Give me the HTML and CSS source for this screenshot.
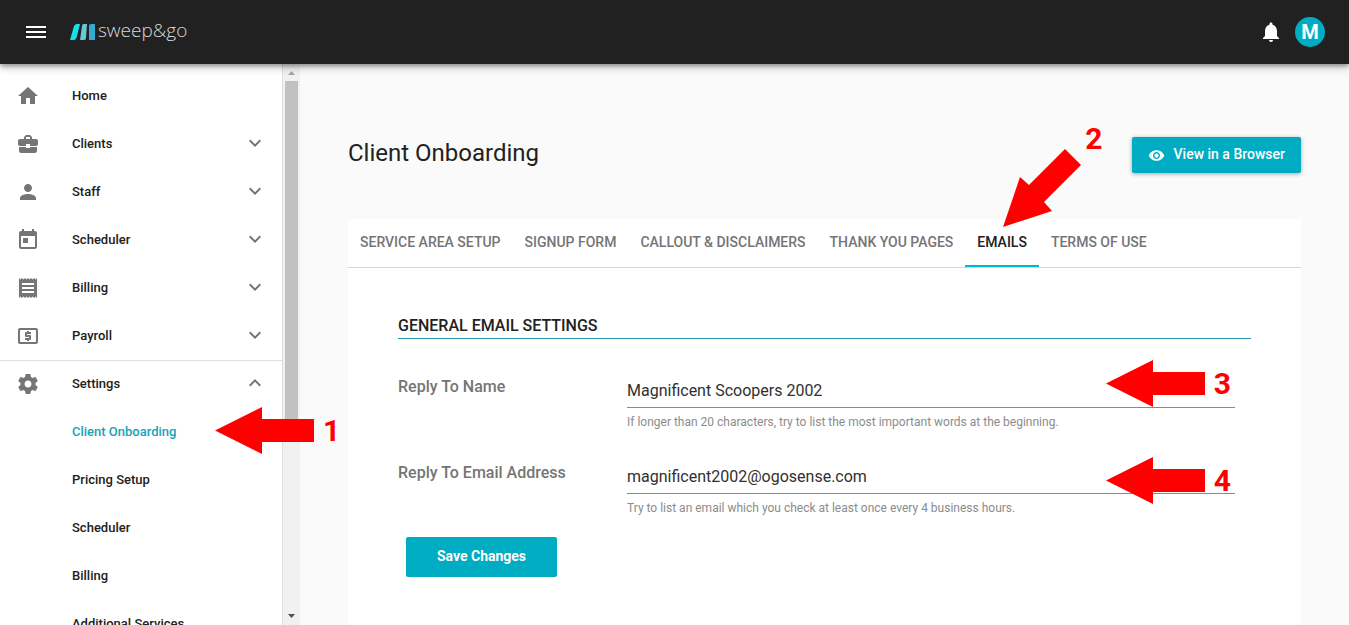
FILE: index.html
```html
<!DOCTYPE html>
<html lang="en">
<head>
  <meta charset="UTF-8">
  <meta name="viewport" content="width=device-width, initial-scale=1.0">
  <title>Client Onboarding</title>
  <link rel="stylesheet" href="styles.css">
</head>
<body>
  <!-- shared shapes -->
  <svg class="sprite" aria-hidden="true">
    <symbol id="chevron-down" viewBox="0 0 24 24"><path d="M7.41 8.59 12 13.17l4.59-4.58L18 10l-6 6-6-6z"/></symbol>
    <symbol id="chevron-up" viewBox="0 0 24 24"><path d="M7.41 15.41 12 10.83l4.59 4.58L18 14l-6-6-6 6z"/></symbol>
    <symbol id="arrow-left" viewBox="0 0 99 47"><path d="M0 23.5 47 0v12h52v23H47v12z"/></symbol>
  </svg>

  <header class="topbar">
    <button class="menu-btn" type="button" aria-label="Menu">
      <svg width="24" height="24" viewBox="0 0 24 24"><path d="M2 6h20v2H2zm0 5h20v2H2zm0 5h20v2H2z"/></svg>
    </button>
    <a class="logo" href="#">
      <svg width="25" height="16" viewBox="0 0 25 16">
        <path fill="#16e0ea" d="M4 2Q5 0 7 0h3L7 12q-1 4-3 4H0z"/>
        <path fill="#62cbd5" d="M12 2q0-2 2-2h3l-1 14q0 2-2 2H10z"/>
        <path fill="#36a9cf" d="M19 2q0-2 2-2h4v16h-6z"/>
      </svg>
      <span>sweep&amp;go</span>
    </a>
    <button class="bell-btn" type="button" aria-label="Notifications">
      <svg width="24" height="24" viewBox="0 0 24 24"><path d="M12 22c1.1 0 2-.9 2-2h-4c0 1.1.9 2 2 2zm6-6v-5c0-3.07-1.63-5.64-4.5-6.32V4c0-.83-.67-1.5-1.5-1.5s-1.5.67-1.5 1.5v.68C7.64 5.36 6 7.92 6 11v5l-2 2v1h16v-1z"/></svg>
    </button>
    <button class="avatar" type="button">M</button>
  </header>

  <div class="layout">
    <aside class="sidebar">
      <nav class="nav">
        <a class="nav-item" href="#">
          <svg class="nav-icon" viewBox="0 0 24 24"><path d="M10 20v-6h4v6h5v-8h3L12 3 2 12h3v8z"/></svg>
          <span>Home</span>
        </a>
        <a class="nav-item" href="#">
          <svg class="nav-icon" viewBox="0 0 24 24"><path d="M10 16v-1H3.01L3 19c0 1.11.89 2 2 2h14c1.11 0 2-.89 2-2v-4h-7v1zm10-9h-4.01V5l-2-2h-4l-2 2v2H4c-1.1 0-2 .9-2 2v3c0 1.11.89 2 2 2h6v-2h4v2h6c1.1 0 2-.9 2-2V9c0-1.1-.9-2-2-2zm-6 0h-4V5h4z"/></svg>
          <span>Clients</span>
          <svg class="chevron"><use href="#chevron-down"/></svg>
        </a>
        <a class="nav-item" href="#">
          <svg class="nav-icon" viewBox="0 0 24 24"><path d="M12 12c2.21 0 4-1.79 4-4s-1.79-4-4-4-4 1.79-4 4 1.79 4 4 4zm0 2c-2.67 0-8 1.34-8 4v2h16v-2c0-2.66-5.33-4-8-4z"/></svg>
          <span>Staff</span>
          <svg class="chevron"><use href="#chevron-down"/></svg>
        </a>
        <a class="nav-item" href="#">
          <svg class="nav-icon" viewBox="0 0 24 24"><path d="M19 3h-1V1h-2v2H8V1H6v2H5c-1.11 0-1.99.9-1.99 2L3 19c0 1.1.89 2 2 2h14c1.1 0 2-.9 2-2V5c0-1.1-.9-2-2-2zm0 16H5V8h14zM7 10h5v5H7z"/></svg>
          <span>Scheduler</span>
          <svg class="chevron"><use href="#chevron-down"/></svg>
        </a>
        <a class="nav-item" href="#">
          <svg class="nav-icon" viewBox="0 0 24 24"><path d="M18 17H6v-2h12zm0-4H6v-2h12zm0-4H6V7h12zM3 22l1.5-1.5L6 22l1.5-1.5L9 22l1.5-1.5L12 22l1.5-1.5L15 22l1.5-1.5L18 22l1.5-1.5L21 22V2l-1.5 1.5L18 2l-1.5 1.5L15 2l-1.5 1.5L12 2l-1.5 1.5L9 2 7.5 3.5 6 2 4.5 3.5 3 2z"/></svg>
          <span>Billing</span>
          <svg class="chevron"><use href="#chevron-down"/></svg>
        </a>
        <a class="nav-item" href="#">
          <svg class="nav-icon" viewBox="0 0 24 24"><path d="M11 17h2v-1h1c.55 0 1-.45 1-1v-3c0-.55-.45-1-1-1h-3v-1h4V8h-2V7h-2v1h-1c-.55 0-1 .45-1 1v3c0 .55.45 1 1 1h3v1H9v2h2zm9-13H4c-1.11 0-1.99.89-1.99 2L2 18c0 1.11.89 2 2 2h16c1.11 0 2-.89 2-2V6c0-1.11-.89-2-2-2zm0 14H4V6h16z"/></svg>
          <span>Payroll</span>
          <svg class="chevron"><use href="#chevron-down"/></svg>
        </a>
        <div class="nav-group">
          <a class="nav-item" href="#">
            <svg class="nav-icon" viewBox="0 0 24 24"><path d="M19.43 12.98c.04-.32.07-.64.07-.98s-.03-.66-.07-.98l2.11-1.65c.19-.15.24-.42.12-.64l-2-3.46c-.12-.22-.39-.3-.61-.22l-2.49 1c-.52-.4-1.08-.73-1.69-.98l-.38-2.65C14.46 2.18 14.25 2 14 2h-4c-.25 0-.46.18-.49.42l-.38 2.65c-.61.25-1.17.59-1.69.98l-2.49-1c-.23-.09-.49 0-.61.22l-2 3.46c-.13.22-.07.49.12.64l2.11 1.65c-.04.32-.07.65-.07.98s.03.66.07.98l-2.11 1.65c-.19.15-.24.42-.12.64l2 3.46c.12.22.39.3.61.22l2.49-1c.52.4 1.08.73 1.69.98l.38 2.65c.03.24.24.42.49.42h4c.25 0 .46-.18.49-.42l.38-2.65c.61-.25 1.17-.59 1.69-.98l2.49 1c.23.09.49 0 .61-.22l2-3.46c.12-.22.07-.49-.12-.64zM12 15.5c-1.93 0-3.5-1.57-3.5-3.5s1.57-3.5 3.5-3.5 3.5 1.57 3.5 3.5-1.57 3.5-3.5 3.5z"/></svg>
            <span>Settings</span>
            <svg class="chevron"><use href="#chevron-up"/></svg>
          </a>
          <div class="nav-current">
            <a class="nav-item nav-sub active" href="#">Client Onboarding</a>
            <div class="callout callout-nav">
              <svg class="arrow"><use href="#arrow-left"/></svg>
              <span>1</span>
            </div>
          </div>
          <a class="nav-item nav-sub" href="#">Pricing Setup</a>
          <a class="nav-item nav-sub" href="#">Scheduler</a>
          <a class="nav-item nav-sub" href="#">Billing</a>
          <a class="nav-item nav-sub" href="#">Additional Services</a>
        </div>
      </nav>
      <div class="scrollbar">
        <svg class="scroll-up" width="7" height="4" viewBox="0 0 7 4"><path d="M0 4 3.5 0 7 4z"/></svg>
        <div class="scroll-thumb"></div>
        <svg class="scroll-down" width="7" height="4" viewBox="0 0 7 4"><path d="M0 0h7L3.5 4z"/></svg>
      </div>
    </aside>

    <main class="content">
      <div class="page-head">
        <h1>Client Onboarding</h1>
        <button class="btn view-btn" type="button">
          <svg width="17" height="17" viewBox="0 0 24 24"><path d="M12 4.5C7 4.5 2.73 7.61 1 12c1.73 4.39 6 7.5 11 7.5s9.27-3.11 11-7.5c-1.73-4.39-6-7.5-11-7.5zM12 17c-2.76 0-5-2.24-5-5s2.24-5 5-5 5 2.24 5 5-2.24 5-5 5zm0-8c-1.66 0-3 1.34-3 3s1.34 3 3 3 3-1.34 3-3-1.34-3-3-3z"/></svg>
          <span>View in a Browser</span>
        </button>
      </div>

      <section class="card">
        <div class="tabs">
          <a class="tab" href="#">Service Area Setup</a>
          <a class="tab" href="#">Signup Form</a>
          <a class="tab" href="#">Callout &amp; Disclaimers</a>
          <a class="tab" href="#">Thank You Pages</a>
          <div class="tab-current">
            <a class="tab active" href="#">Emails</a>
            <div class="callout callout-tab">
              <svg width="78" height="78" viewBox="0 0 78 78"><path d="M0 78 17 28l9 8L62 0l16 16-37 37 8 9z"/></svg>
              <span>2</span>
            </div>
          </div>
          <a class="tab" href="#">Terms of Use</a>
        </div>

        <form class="settings">
          <h2>General Email Settings</h2>
          <div class="field">
            <label for="replyName">Reply To Name</label>
            <div class="control">
              <input type="text" id="replyName" name="replyName" value="Magnificent Scoopers 2002">
              <p class="hint">If longer than 20 characters, try to list the most important words at the beginning.</p>
              <div class="callout callout-name">
                <svg class="arrow"><use href="#arrow-left"/></svg>
                <span>3</span>
              </div>
            </div>
          </div>
          <div class="field">
            <label for="replyEmail">Reply To Email Address</label>
            <div class="control">
              <input type="email" id="replyEmail" name="replyEmail" value="magnificent2002@ogosense.com">
              <p class="hint">Try to list an email which you check at least once every 4 business hours.</p>
              <div class="callout callout-email">
                <svg class="arrow"><use href="#arrow-left"/></svg>
                <span>4</span>
              </div>
            </div>
          </div>
          <button class="btn save-btn" type="submit">Save Changes</button>
        </form>
      </section>
    </main>
  </div>
</body>
</html>
```
FILE: styles.css
```css
* {
  box-sizing: border-box;
}
body {
  display: flex;
  flex-direction: column;
  height: 100vh;
  margin: 0;
  overflow: hidden;
  background: #fafafa;
  color: #212121;
  font-family: Roboto, "Liberation Sans", sans-serif;
}
a {
  color: inherit;
  text-decoration: none;
}
button {
  border: 0;
  padding: 0;
  background: none;
  color: inherit;
  font-family: inherit;
  cursor: pointer;
}
svg {
  display: block;
  fill: currentColor;
  flex: none;
}
.sprite {
  position: absolute;
  width: 0;
  height: 0;
}

/* top bar */
.topbar {
  position: relative;
  z-index: 2;
  flex: none;
  display: flex;
  align-items: center;
  height: 64px;
  padding: 0 24px;
  background: #212121;
  color: #fff;
  box-shadow: 0 2px 4px rgba(0, 0, 0, 0.3), 0 4px 8px rgba(0, 0, 0, 0.2);
}
.logo {
  display: flex;
  align-items: center;
  gap: 3px;
  margin-left: 22px;
  color: #d8d8d8;
  font-family: "Open Sans", sans-serif;
  font-size: 19px;
  font-weight: 300;
  line-height: 24px;
}
.logo span {
  padding-bottom: 4px;
}
.bell-btn {
  margin-left: auto;
}
.avatar {
  width: 30px;
  height: 30px;
  margin-left: 12px;
  border-radius: 50%;
  background: #00acc1;
  color: #fff;
  font-size: 20px;
  font-weight: 700;
}

.layout {
  display: flex;
  flex: 1;
  min-height: 0;
}

/* sidebar */
.sidebar {
  flex: none;
  display: flex;
  width: 300px;
  background: #fff;
}
.nav {
  flex: 1;
  padding-top: 8px;
}
.nav-item {
  display: flex;
  align-items: center;
  height: 48px;
  padding: 0 15px 2px 16px;
  font-size: 13px;
  font-weight: 500;
}
.nav-icon {
  width: 24px;
  height: 24px;
  margin: 2px 32px 0 0;
  color: #757575;
}
.chevron {
  width: 24px;
  height: 24px;
  margin-left: auto;
  color: #757575;
}
.nav-group {
  box-shadow: inset 0 1px #e0e0e0;
}
.nav-sub {
  padding-left: 72px;
}
.nav-sub.active {
  color: #17a2b8;
}
.nav-current,
.tab-current,
.control {
  position: relative;
}
.scrollbar {
  display: flex;
  flex-direction: column;
  align-items: center;
  width: 18px;
  border-left: 1px solid #dedede;
  background: #f1f1f1;
}
.scroll-up {
  margin: 7px 0 6px;
  color: #a3a3a3;
}
.scroll-thumb {
  width: 13px;
  height: 62%;
  background: #c1c1c1;
}
.scroll-down {
  margin: auto 0 7px;
  color: #505050;
}

/* page */
.content {
  flex: 1;
  display: flex;
  flex-direction: column;
  min-width: 0;
  padding: 73px 48px 0;
}
.page-head {
  display: flex;
  align-items: flex-start;
  justify-content: space-between;
  margin-bottom: 46px;
}
h1 {
  margin: 0;
  font-size: 24px;
  font-weight: 400;
  line-height: 32px;
}
.btn {
  border-radius: 2px;
  background: #00acc1;
  color: #fff;
  font-size: 14px;
}
.view-btn {
  display: flex;
  align-items: center;
  gap: 9px;
  height: 36px;
  padding: 0 16px;
  font-weight: 500;
  box-shadow: 0 1px 4px rgba(0, 0, 0, 0.35);
}
.view-btn span {
  padding-bottom: 2px;
}
.card {
  flex: 1;
  background: #fff;
}
.tabs {
  display: flex;
  border-bottom: 1px solid #b2e5ec;
}
.tab {
  display: block;
  height: 48px;
  padding: 0 12px;
  color: #757575;
  font-size: 14px;
  font-weight: 500;
  line-height: 47px;
  text-transform: uppercase;
}
.tab.active {
  border-bottom: 2px solid #00b8d4;
  color: #212121;
}

/* form */
.settings {
  padding: 48px 50px 0;
}
h2 {
  margin: 0 0 33px;
  padding-bottom: 2px;
  border-bottom: 1px solid #2b9cb5;
  font-size: 16px;
  font-weight: 500;
  line-height: 20px;
  text-transform: uppercase;
}
.field {
  display: flex;
  height: 86px;
  padding-right: 16px;
}
.field label {
  flex: none;
  width: 229px;
  padding-top: 4px;
  color: #757575;
  font-size: 16px;
  font-weight: 500;
  line-height: 22px;
}
.control {
  flex: 1;
}
.control input {
  display: block;
  width: 100%;
  height: 36px;
  padding: 2px 0 0;
  border: 0;
  border-bottom: 1px solid #8a8a8a;
  outline: 0;
  background: none;
  color: #303030;
  font-family: inherit;
  font-size: 16px;
}
.hint {
  margin: 6px 0 0;
  color: #8c8c8c;
  font-size: 12px;
  line-height: 16px;
}
.save-btn {
  width: 151px;
  height: 40px;
  margin: -7px 0 0 8px;
  padding-bottom: 2px;
  font-weight: 700;
}

/* numbered callouts, drawn over the page */
.callout {
  position: absolute;
  z-index: 1;
  display: flex;
  align-items: center;
  gap: 9px;
  color: #f00;
  font-size: 30px;
  font-weight: 700;
  line-height: 47px;
  pointer-events: none;
}
.arrow {
  width: 99px;
  height: 47px;
}
.callout-nav {
  top: -1px;
  left: 215px;
}
.callout-tab {
  bottom: 40px;
  left: 38px;
  align-items: flex-start;
  gap: 4px;
}
.callout-tab span {
  margin-top: -34px;
}
.callout-name {
  top: -12px;
  right: 4px;
}
.callout-email {
  top: -1px;
  right: 4px;
}
```
